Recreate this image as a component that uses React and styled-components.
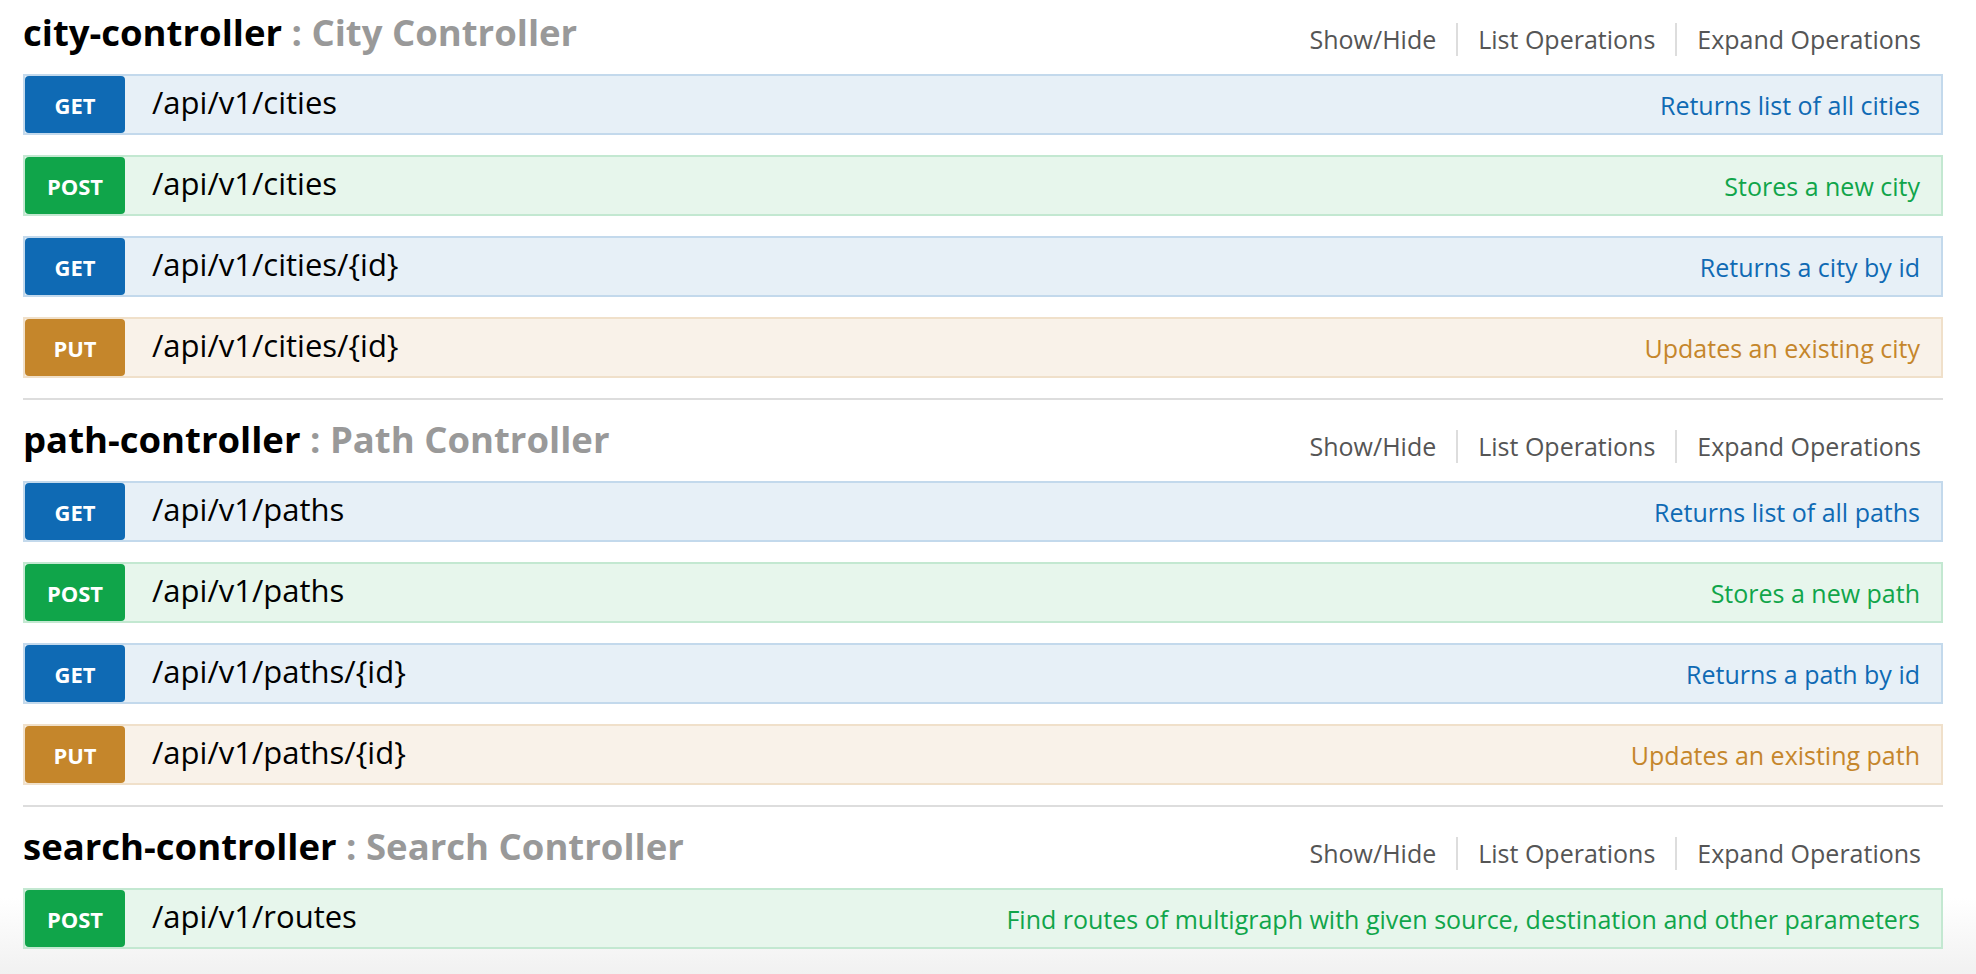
import React from "react";
import styled, { createGlobalStyle } from "styled-components";

const GlobalStyle = createGlobalStyle`
  html, body {
    margin: 0;
    padding: 0;
  }
  body {
    font-family: "Open Sans", "Noto Sans", "Liberation Sans", sans-serif;
    background: #fff;
  }
`;

const METHOD = {
  get: { bg: "#e7f0f7", border: "#c3d9ec", main: "#0f6ab4" },
  post: { bg: "#e7f6ec", border: "#c3e8d1", main: "#10a54a" },
  put: { bg: "#f9f2e9", border: "#f0e0ca", main: "#c5862b" },
};

const Page = styled.div`
  min-height: 100vh;
  box-sizing: border-box;
  padding: 0 33px 0 23px;
  background: linear-gradient(to bottom, #ffffff 0, #ffffff calc(100% - 76px), #f1f1f1 100%);
`;

const Resources = styled.ul`
  list-style: none;
  margin: 0;
  padding: 0;
`;

const Resource = styled.li`
  border-bottom: 2px solid #dddddd;
  padding-top: 7px;
  &:first-child {
    padding-top: 0;
  }
  &:last-child {
    border-bottom: none;
  }
`;

const Heading = styled.div`
  display: flex;
  justify-content: space-between;
  align-items: flex-start;
  height: 74px;
  box-sizing: border-box;
`;

const Title = styled.h2`
  margin: 9px 0 0;
  font-size: 36.5px;
  line-height: 46px;
  font-weight: 700;
  color: #999999;
  white-space: nowrap;
`;

const Name = styled.span`
  color: #000;
`;

const Options = styled.ul`
  display: flex;
  list-style: none;
  margin: 23px 22px 0 0;
  padding: 0;
`;

const Option = styled.li`
  padding: 2px 20px;
  font-size: 25px;
  line-height: 29px;
  color: #555555;
  border-right: 2px solid #dddddd;
  &:last-child {
    padding-right: 0;
    border-right: none;
  }
`;

const Endpoints = styled.ul`
  list-style: none;
  margin: 0;
  padding: 0;
`;

const Operation = styled.li`
  display: flex;
  align-items: center;
  height: 61px;
  box-sizing: border-box;
  margin-bottom: 20px;
  background: ${(p) => METHOD[p.$method].bg};
  border: 2px solid ${(p) => METHOD[p.$method].border};
`;

const Method = styled.span`
  align-self: stretch;
  display: flex;
  align-items: center;
  justify-content: center;
  width: 100px;
  flex-shrink: 0;
  border-radius: 4px;
  background: ${(p) => METHOD[p.$method].main};
  color: #fff;
  font-size: 22px;
  font-weight: 700;
  text-transform: uppercase;
`;

const Path = styled.span`
  margin: 0 0 5px 27px;
  font-size: 31px;
  color: #000;
  white-space: nowrap;
`;

const Summary = styled.span`
  margin-left: auto;
  padding-right: 21px;
  font-size: 25px;
  color: ${(p) => METHOD[p.$method].main};
  white-space: nowrap;
`;

const data = [
  {
    name: "city-controller",
    desc: "City Controller",
    ops: [
      ["get", "/api/v1/cities", "Returns list of all cities"],
      ["post", "/api/v1/cities", "Stores a new city"],
      ["get", "/api/v1/cities/{id}", "Returns a city by id"],
      ["put", "/api/v1/cities/{id}", "Updates an existing city"],
    ],
  },
  {
    name: "path-controller",
    desc: "Path Controller",
    ops: [
      ["get", "/api/v1/paths", "Returns list of all paths"],
      ["post", "/api/v1/paths", "Stores a new path"],
      ["get", "/api/v1/paths/{id}", "Returns a path by id"],
      ["put", "/api/v1/paths/{id}", "Updates an existing path"],
    ],
  },
  {
    name: "search-controller",
    desc: "Search Controller",
    ops: [
      [
        "post",
        "/api/v1/routes",
        "Find routes of multigraph with given source, destination and other parameters",
      ],
    ],
  },
];

export default function App() {
  return (
    <>
      <GlobalStyle />
      <Page>
        <Resources>
          {data.map((r) => (
            <Resource key={r.name}>
              <Heading>
                <Title>
                  <Name>{r.name}</Name> : {r.desc}
                </Title>
                <Options>
                  <Option>Show/Hide</Option>
                  <Option>List Operations</Option>
                  <Option>Expand Operations</Option>
                </Options>
              </Heading>
              <Endpoints>
                {r.ops.map(([m, p, s], i) => (
                  <Operation key={i} $method={m}>
                    <Method $method={m}>{m}</Method>
                    <Path>{p}</Path>
                    <Summary $method={m}>{s}</Summary>
                  </Operation>
                ))}
              </Endpoints>
            </Resource>
          ))}
        </Resources>
      </Page>
    </>
  );
}
